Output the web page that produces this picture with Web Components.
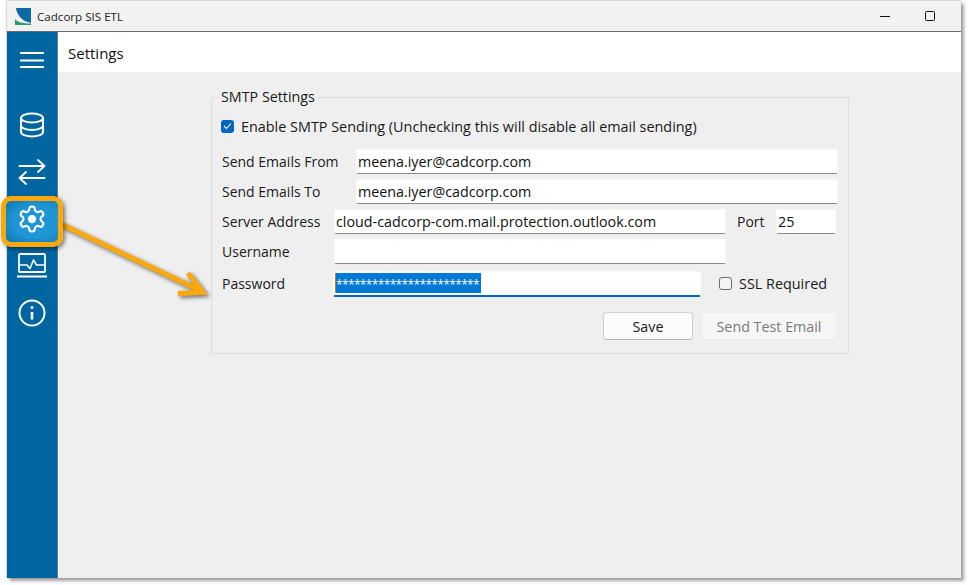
<!DOCTYPE html>
<html><head><meta charset="utf-8"><title>Cadcorp SIS ETL</title>
<style>
html,body{margin:0;padding:0;background:#fff;height:100%;overflow:hidden}
body{font:14.3px "Open Sans","Noto Sans",sans-serif;color:#1a1a1a}
</style></head><body>
<app-window>
  <title-bar slot="title" label="Cadcorp SIS ETL"></title-bar>
  <side-rail slot="rail"></side-rail>
  <page-header slot="header">Settings</page-header>
  <smtp-panel slot="content"></smtp-panel>
</app-window>
<script>
function def(name, html){
  customElements.define(name, class extends HTMLElement{
    connectedCallback(){
      if(this.shadowRoot) return;
      const r=this.attachShadow({mode:'open'});
      r.innerHTML = typeof html==='function'?html(this):html;
    }
  });
}
const FONT='"Open Sans","Noto Sans",sans-serif';
def('app-window',`<style>
:host{display:block;position:relative;width:954px;height:577px;margin:1px 0 0 7px;background:#efefef;box-shadow:0 0 2px #888,3px 3px 3px rgba(0,0,0,.35);}
.grid{display:grid;grid-template-columns:51px 1fr;grid-template-rows:31px 40px 1fr;height:100%}
.t{grid-column:1/3}.r{grid-row:2/4;border-right:1px solid #6f7f88;min-height:0}
</style><div class="grid">
<div class="t"><slot name="title"></slot></div>
<div class="r"><slot name="rail"></slot></div>
<div><slot name="header"></slot></div>
<div><slot name="content"></slot></div>
</div>
<callout-arrow></callout-arrow>`);
def('title-bar',el=>`<style>
:host{display:flex;align-items:center;height:31px;box-sizing:border-box;background:#f2f2f2;border-bottom:1px solid #6b6b6b;padding-left:8px;font:11.600px ${FONT};color:#222}
svg{display:block}
span{margin-left:6px}
.sp{flex:1}
.btns{display:flex;align-items:center;gap:35px;margin-right:26px}
.min{width:10px;height:1px;background:#111}
.max{width:8px;height:8px;border:1px solid #111;border-radius:1.500px}
</style>
<svg width="16" height="17" viewBox="0 0 16 17"><path d="M1 0H16V14.500C9 14 3 9 1 0Z" fill="#0b6aa2" stroke="#0b6aa2" stroke-width=".5"/><path d="M0 11C3 14.500 8 15.500 16 15.500V17H0Z" fill="#2e9a6a"/></svg>
<span>${el.getAttribute('label')}</span><div class="sp"></div>
<div class="btns"><div class="min"></div><div class="max"></div></div>`);
const ic=(w,h,vb,body)=>`<svg width="${w}" height="${h}" viewBox="${vb}" fill="none" stroke="#fff" stroke-width="2" stroke-linecap="round" stroke-linejoin="round">${body}</svg>`;
def('side-rail',`<style>
:host{display:flex;flex-direction:column;align-items:center;height:100%;background:#0066a1;padding-top:16px;box-sizing:border-box;position:relative}
svg{display:block;flex:none}
.i{display:flex;justify-content:center;align-items:center;height:47px;width:100%}
.m{height:24px;margin-bottom:29px;display:flex;align-items:center}
</style>
<div class="m">${ic(26,18,'0 0 26 18','<path stroke-linecap="butt" d="M1 2H25M1 9.500H25M1 16H25"/>')}</div>
<div class="i">${ic(26,26,'0 0 26 26','<ellipse cx="13" cy="6" rx="11" ry="4.500"/><path d="M2 6V20C2 22.500 7 24.500 13 24.500S24 22.500 24 20V6M2 13.500C2 16 7 18 13 18S24 16 24 13.500"/>')}</div>
<div class="i">${ic(28,26,'0 0 28 26','<path d="M1.500 7H26.500M20 1L26.500 7L20 13M1.500 19H26.500M8 13L1.500 19L8 25" stroke-width="1.800"/>')}</div>
<div class="i"></div>
<div class="i">${ic(32,25,'0 0 32 25','<rect x="3" y="1" width="26" height="18" stroke-width="1.800" rx="1"/><path d="M3 12H11L14 15.500L17.500 7L20.500 12H29" stroke-width="1.600"/><path d="M1 23.500H31" stroke-linecap="butt"/>')}</div>
<div class="i">${ic(28,28,'0 0 28 28','<circle cx="14" cy="14" r="12.500"/><path d="M14 13V20.500" stroke-width="2.600" stroke-linecap="butt"/><circle cx="14" cy="8.500" r="1.500" fill="#fff" stroke="none"/>')}</div>`);
def('page-header',`<style>:host{display:flex;align-items:center;height:40px;background:#fff;padding:1px 0 0 10px;font:15px ${FONT};color:#111;box-sizing:border-box}</style><slot></slot>`);
def('text-field',el=>{
  const w=el.getAttribute('w'), v=el.getAttribute('value')||'', f=el.hasAttribute('focus'), sel=el.getAttribute('sel');
  return `<style>
:host{display:block;flex:none;width:${w}px;height:${f?26:25}px;box-sizing:border-box;background:#fff;border:1px solid #fafafa;border-bottom:${f?'2px solid #0067c0':'1.500px solid #8a8a8a'};border-radius:2px;padding-left:${f?2:1}px;font:14.300px/23px ${FONT};color:#111;white-space:nowrap;overflow:hidden;}
.s{display:inline-block;background:#0078d7;color:#fff;height:20px;line-height:24px;width:145px;box-shadow:-1px 0 0 #c77a1c;vertical-align:top;margin-top:1px;font-size:12px;letter-spacing:-.65px;overflow:hidden}
</style>${sel?`<span class="s">${sel}</span>`:v}`;
});
def('check-box',el=>{
  const on=el.hasAttribute('checked');
  return `<style>:host{display:inline-flex;align-items:center;font:14.400px ${FONT};color:#1a1a1a;white-space:nowrap}
.b{width:13px;height:13px;box-sizing:border-box;border-radius:3px;margin-right:7px;display:flex;align-items:center;justify-content:center;${on?'background:#0067c0':'border:1px solid #6a6a6a;background:#f4f4f4'}}
svg{display:block}</style>
<div class="b">${on?'<svg width="9" height="8" viewBox="0 0 9 8"><path d="M1 4L3.500 6.500L8 1.500" fill="none" stroke="#fff" stroke-width="1.100"/></svg>':''}</div><slot></slot>`;
});
def('win-button',el=>{
  const dis=el.hasAttribute('disabled');
  return `<style>:host{display:flex;align-items:center;justify-content:center;box-sizing:border-box;height:28px;width:${el.getAttribute('w')}px;border-radius:4px;font:14.300px ${FONT};${dis?'background:#f6f6f6;border:1px solid #ececec;color:#7b7b7b':'background:#fbfbfb;border:1px solid #cfcfcf;border-bottom-color:#b5b5b5;color:#1a1a1a'}}</style><slot></slot>`;
});
def('smtp-panel',`<style>
:host{display:block;font:14.300px ${FONT};color:#1a1a1a;padding:25px 0 0 153px}
.box{position:relative;width:638px;height:257px;box-sizing:border-box;border:1px solid #dcdcdc;padding:15px 0 0 9px}
.leg{position:absolute;left:6px;top:-11px;background:#efefef;padding:0 3px;line-height:20px}
.row{display:flex;align-items:center}
.lab{flex:none;white-space:nowrap;padding-left:1px;box-sizing:border-box;font-size:14px}
.chk{height:26px;margin-bottom:10px}
.r{margin-bottom:5px}
.l1{width:135px}.l2{width:113px}
.port{margin:0 12px 0 10px;width:28px}
.pw{margin-top:7px;margin-bottom:15px}
.pw .lab{position:relative;top:-1px}
.pw check-box{margin:-2px 0 0 18px}
.btn{display:flex;gap:8px;padding-left:382px}
</style>
<div class="box"><div class="leg">SMTP Settings</div>
<div class="row chk"><check-box checked>Enable SMTP Sending (Unchecking this will disable all email sending)</check-box></div>
<div class="row r"><div class="lab l1">Send Emails From</div><text-field w="482" value="meena.iyer@cadcorp.com"></text-field></div>
<div class="row r"><div class="lab l1">Send Emails To</div><text-field w="482" value="meena.iyer@cadcorp.com"></text-field></div>
<div class="row r"><div class="lab l2">Server Address</div><text-field w="392" value="cloud-cadcorp-com.mail.protection.outlook.com"></text-field><div class="lab port">Port</div><text-field w="60" value="25"></text-field></div>
<div class="row"><div class="lab l2">Username</div><text-field w="392"></text-field></div>
<div class="row pw"><div class="lab" style="width:112px">Password</div><text-field focus w="368" sel="************************"></text-field><check-box>SSL Required</check-box></div>
<div class="btn"><win-button w="90">Save</win-button><win-button disabled w="136">Send Test Email</win-button></div>
</div>`);
def('callout-arrow',`<style>
:host{display:block;position:absolute;left:-7px;top:-1px;width:968px;height:585px;pointer-events:none}
svg{position:absolute;left:0;top:0}
.hl{position:absolute;left:1px;top:196px;width:62px;height:51px;box-sizing:border-box;border:5px solid #f9a90c;border-radius:10px;padding-bottom:6px;background:radial-gradient(ellipse at 60% 50%,#2095d4 55%,#0f75b0 100%);box-shadow:2px 2px 4px rgba(0,0,0,.5);display:flex;align-items:center;justify-content:center}
.ar{filter:drop-shadow(2px 2px 2px rgba(0,0,0,.55))}
</style>
<svg class="ar" width="968" height="585" fill="none"><path d="M62 224.500L202 291.500M188 273L203 292.500L178 293.500" stroke="#f9a90c" stroke-width="5" stroke-linejoin="miter"/></svg>
<div class="hl"><svg style="position:static;display:block" width="30" height="30" viewBox="0 0 24 24" fill="none" stroke="#fff" stroke-width="1.700" stroke-linejoin="round"><path d="M12.220 2h-.44a2 2 0 0 0-2 2v.18a2 2 0 0 1-1 1.730l-.43.25a2 2 0 0 1-2 0l-.15-.08a2 2 0 0 0-2.730.73l-.22.38a2 2 0 0 0 .73 2.730l.15.1a2 2 0 0 1 1 1.720v.51a2 2 0 0 1-1 1.740l-.15.09a2 2 0 0 0-.73 2.730l.22.38a2 2 0 0 0 2.730.73l.15-.08a2 2 0 0 1 2 0l.43.25a2 2 0 0 1 1 1.730V20a2 2 0 0 0 2 2h.44a2 2 0 0 0 2-2v-.18a2 2 0 0 1 1-1.730l.43-.25a2 2 0 0 1 2 0l.15.08a2 2 0 0 0 2.730-.73l.22-.39a2 2 0 0 0-.73-2.730l-.15-.08a2 2 0 0 1-1-1.740v-.5a2 2 0 0 1 1-1.740l.15-.09a2 2 0 0 0 .73-2.730l-.22-.38a2 2 0 0 0-2.730-.73l-.15.08a2 2 0 0 1-2 0l-.43-.25a2 2 0 0 1-1-1.730V4a2 2 0 0 0-2-2z"/><circle cx="12" cy="12" r="3.300" fill="#fff" stroke="none"/></svg></div>`);
</script>
</body></html>
